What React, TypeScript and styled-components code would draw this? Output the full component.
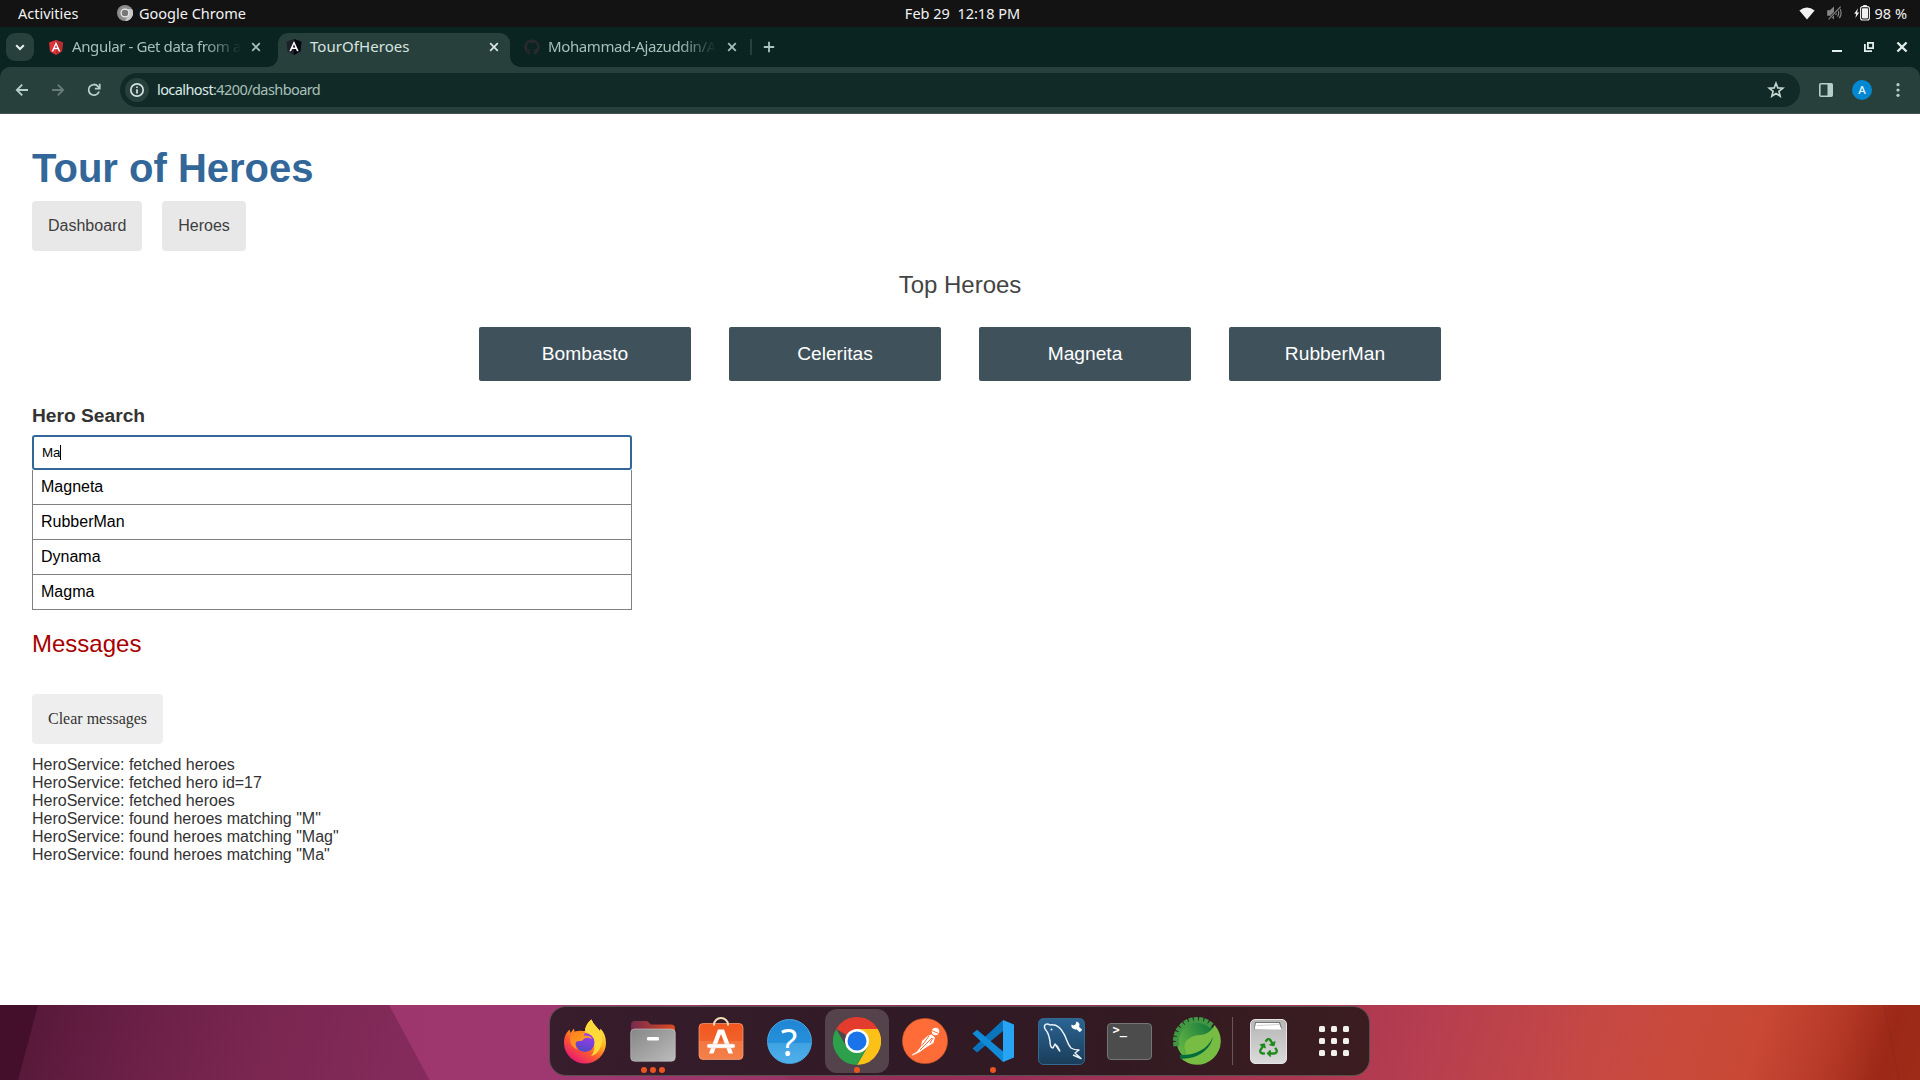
import React from "react";
import styled, { createGlobalStyle } from "styled-components";
import { FaGithub, FaRecycle } from "react-icons/fa";

const UI = `"Noto Sans", "Open Sans", sans-serif`;
const SANS = `"Liberation Sans", Arial, sans-serif`;

const Global = createGlobalStyle`
  *, *::before, *::after { box-sizing: border-box; }
  html, body { margin: 0; padding: 0; }
  body { width: 1920px; height: 1080px; overflow: hidden; background: #fff; }
  svg { display: block; flex: none; }
`;

const Desktop = styled.div`
  display: flex;
  flex-direction: column;
  width: 1920px;
  height: 1080px;
  overflow: hidden;
`;

/* ---------- GNOME top bar ---------- */
const TopBar = styled.header`
  display: grid;
  grid-template-columns: 1fr auto 1fr;
  align-items: center;
  height: 27px;
  flex: none;
  padding: 0 13px 1px 18px;
  background: #131313;
  color: #f2f2f2;
  font: 400 14.5px/26px ${UI};
`;

const BarGroup = styled.div<{ $end?: boolean; $gap?: number }>`
  display: flex;
  align-items: center;
  justify-content: ${(p) => (p.$end ? "flex-end" : "flex-start")};
  gap: ${(p) => p.$gap ?? 0}px;
`;

const Label = styled.span<{ $w?: number; $ls?: number; $ml?: number }>`
  white-space: pre;
  width: ${(p) => (p.$w ? p.$w + "px" : "auto")};
  margin-left: ${(p) => p.$ml ?? 0}px;
  letter-spacing: ${(p) => p.$ls ?? 0}px;
`;

/* ---------- Browser chrome ---------- */
const TabStrip = styled.div`
  display: flex;
  align-items: stretch;
  height: 40px;
  flex: none;
  padding: 6px 12px 0 6px;
  background: #0a2421;
`;

const TabMenu = styled.button`
  display: grid;
  place-items: center;
  width: 28px;
  height: 28px;
  padding: 0;
  border: 0;
  border-radius: 9px;
  background: #28403b;
  color: #e4f1ed;
`;

const Tab = styled.div<{ $active?: boolean; $w: number; $pad: number; $end: number }>`
  position: relative;
  display: flex;
  align-items: center;
  width: ${(p) => p.$w}px;
  height: 34px;
  padding: 0 ${(p) => p.$end}px 6px ${(p) => p.$pad}px;
  border-radius: 10px 10px 0 0;
  background: ${(p) => (p.$active ? "#28403b" : "transparent")};
  color: ${(p) => (p.$active ? "#d6e5e1" : "#a5c0b9")};
  font: 400 15px/26px ${UI};

  &::before,
  &::after {
    content: "";
    display: ${(p) => (p.$active ? "block" : "none")};
    position: absolute;
    bottom: 0;
    width: 10px;
    height: 10px;
  }
  &::before {
    left: -10px;
    background: radial-gradient(circle at 0 0, transparent 9.5px, #28403b 10px);
  }
  &::after {
    right: -10px;
    background: radial-gradient(circle at 100% 0, transparent 9.5px, #28403b 10px);
  }
`;

const TabTitle = styled.span<{ $fade?: boolean; $ls: number; $w: number; $ml?: number }>`
  width: ${(p) => p.$w}px;
  margin-left: ${(p) => p.$ml ?? 8}px;
  padding-bottom: 2px;
  white-space: nowrap;
  letter-spacing: ${(p) => p.$ls}px;
  mask-image: ${(p) =>
    p.$fade ? "linear-gradient(90deg, #000 calc(100% - 36px), transparent)" : "none"};
`;

const Push = styled.span`
  margin-left: auto;
  display: flex;
  align-items: center;
`;

const Divider = styled.i`
  width: 2px;
  height: 16px;
  margin: 6px 11px 0 4px;
  background: #28403b;
`;

const StripIcon = styled.span<{ $c?: string }>`
  display: flex;
  align-items: center;
  height: 28px;
  color: ${(p) => p.$c ?? "#a9c7bf"};
`;

const Windows = styled.div`
  display: flex;
  align-items: center;
  height: 28px;
  margin-left: auto;
  gap: 22px;
`;

const ToolbarWrap = styled.div`
  flex: none;
  height: 47px;
  background: #0a2421;
`;

const Toolbar = styled.div`
  display: flex;
  align-items: center;
  height: 47px;
  padding: 0 20px 1px 15px;
  border-bottom: 1px solid #3f534f;
  border-radius: 10px 10px 0 0;
  background: #28403b;
`;

const NavButtons = styled.div`
  display: flex;
  gap: 22px;
  width: 105px;
`;

const Omnibox = styled.div`
  display: flex;
  align-items: center;
  width: 1680px;
  height: 34px;
  padding: 0 15px 0 5px;
  border-radius: 17px;
  background: #122a27;
  color: #a9c0ba;
  font: 400 14.5px/32px ${UI};

  b {
    font-weight: 400;
    color: #dcebe7;
  }
`;

const Url = styled(Label)`
  padding-bottom: 2px;
`;

const InfoBadge = styled.span`
  display: grid;
  place-items: center;
  width: 24px;
  height: 24px;
  margin-right: 8px;
  border-radius: 50%;
  background: #28403b;
`;

const Avatar = styled.span`
  width: 20px;
  height: 20px;
  border-radius: 50%;
  background: #0288d1;
  color: #e6f3fa;
  text-align: center;
  font: 500 11.5px/20px ${UI};
`;

const ToolbarEnd = styled.div`
  display: flex;
  align-items: center;
  margin-left: 19px;
  gap: 19px;
`;

/* ---------- Web page ---------- */
const Page = styled.main`
  height: 891px;
  flex: none;
  padding: 31px 32px 32px;
  background: #fff;
  color: #333;
  font: 400 16px/18px ${SANS};
`;

const Title = styled.h1`
  margin: 0 0 10px;
  color: #336699;
  font: 700 40px/46px ${SANS};
`;

const Nav = styled.nav`
  display: flex;
  gap: 20px;
`;

const NavLink = styled.a`
  height: 50px;
  padding: 16px;
  border-radius: 4px;
  background: #e8e8e8;
  color: #3d3d3d;
`;

const Heading = styled.h2<{ $center?: boolean; $color: string; $bottom: number }>`
  margin: 20px 0 ${(p) => p.$bottom}px;
  text-align: ${(p) => (p.$center ? "center" : "left")};
  color: ${(p) => p.$color};
  font: 400 24px/28px ${SANS};
`;

const HeroMenu = styled.div`
  display: flex;
  justify-content: center;
  gap: 38px;
`;

const HeroCard = styled.a`
  width: 212px;
  height: 54px;
  padding: 16px 0;
  border-radius: 2px;
  background: #3f525c;
  color: #fff;
  text-align: center;
  font: 400 19.2px/22px ${SANS};
`;

const SearchLabel = styled.label`
  display: block;
  margin: 24px 0 8px;
  font: 700 19.2px/22px ${SANS};
`;

const SearchBox = styled.div`
  display: flex;
  align-items: center;
  width: 600px;
  height: 35px;
  padding: 0 8px 1px;
  border: 2px solid #336699;
  border-radius: 3px;
  color: #000;
  font: 400 13.333px/15px ${SANS};
`;

const Caret = styled.i`
  width: 1px;
  height: 15px;
  margin-left: -1px;
  background: #000;
`;

const Results = styled.ul`
  width: 600px;
  margin: 0;
  padding: 0;
  list-style: none;
`;

const Result = styled.li`
  height: 35px;
  padding: 8px;
  border: 1px solid #808080;
  border-top: 0;
  color: #000;
`;

const ClearButton = styled.button`
  display: block;
  height: 50px;
  margin: 0 0 12px;
  padding: 0 16px;
  border: 0;
  border-radius: 4px;
  background: #eee;
  color: #333;
  font: 400 16px/18px "Liberation Serif", "Times New Roman", serif;
`;

/* ---------- Dock ---------- */
const Wallpaper = styled.footer`
  position: relative;
  display: flex;
  justify-content: center;
  height: 75px;
  flex: none;
  padding: 1px 1px 0 0;
  background: linear-gradient(
    107deg,
    #541838 1%,
    #6a1f46 7%,
    #78264f 13%,
    #842b5b 22%,
    #95305c 38%,
    #972e58 52%,
    #ab3650 68%,
    #b33c51 72.5%,
    #c54845 82%,
    #c94a3b 87%,
    #c84835 91%,
    #b63927 95%,
    #9c2817 97.8%,
    #9e2a18 100%
  );
`;

const Facets = styled.svg`
  position: absolute;
  inset: 0;
`;

const Dock = styled.div`
  position: relative;
  display: flex;
  align-items: flex-start;
  width: 821px;
  height: 70px;
  padding: 2px 0 0 3px;
  border: 1px solid #56504f;
  border-radius: 17px;
  background: linear-gradient(100deg, #381d2c 0%, #301a25 45%, #331a22 70%, #3b1d20 100%);
`;

const Slot = styled.div<{ $active?: boolean; $w?: number }>`
  position: relative;
  display: grid;
  place-items: center;
  flex: none;
  width: ${(p) => p.$w ?? 64}px;
  height: 64px;
  margin-right: 4px;
  border-radius: 12px;
  background: ${(p) => (p.$active ? "#55434c" : "transparent")};
`;

const Dots = styled.span`
  position: absolute;
  bottom: 0;
  left: 0;
  right: 0;
  display: flex;
  justify-content: center;
  gap: 3px;

  i {
    width: 6px;
    height: 6px;
    border-radius: 50%;
    background: #e95420;
  }
`;

const DockRule = styled.i`
  flex: none;
  width: 1px;
  height: 48px;
  margin: 8px 3px 0 -1px;
  background: #6a5558;
`;

/* ---------- Small icons ---------- */
const Cross = ({ s = 8, w = 1.8 }: { s?: number; w?: number }) => (
  <svg width={s + 2} height={s + 2} viewBox="0 0 10 10" stroke="currentColor" strokeWidth={w}>
    <path d="M1.2 1.2 8.8 8.8M8.8 1.2 1.2 8.8" />
  </svg>
);

const AngularMark = ({ dark }: { dark?: boolean }) => (
  <svg width={dark ? 16 : 14} height={dark ? 16 : 15} viewBox="0 0 16 17">
    <path d="M8 0 16 2.8 14.8 13.2 8 17 1.2 13.2 0 2.8Z" fill={dark ? "#1d1f2b" : "#e23237"} />
    <path d="M8 0 16 2.8 14.8 13.2 8 17Z" fill={dark ? "#050712" : "#b52e31"} />
    <path
      fillRule="evenodd"
      d="M8 2 13 13H11.1L10.1 10.5H5.9L4.9 13H3ZM8 5.5 6.6 8.9H9.4Z"
      fill="#fff"
    />
  </svg>
);

const Back = ({ flip }: { flip?: boolean }) => (
  <svg
    width="14"
    height="14"
    viewBox="0 0 14 14"
    fill="none"
    stroke={flip ? "#667d77" : "#b4d0c9"}
    strokeWidth="1.8"
    transform={flip ? "scale(-1 1)" : undefined}
  >
    <path d="M13 7H2M7.2 1.6 1.8 7 7.2 12.4" />
  </svg>
);

const Reload = () => (
  <svg width="14" height="14" viewBox="0 0 14 14" fill="none" stroke="#b4d0c9" strokeWidth="1.8">
    <path d="M12 8.4A5.3 5.3 0 1 1 10.9 3.3L12.6 5" />
    <path d="M12.7.8V5.6H7.9" />
  </svg>
);

const Info = () => (
  <svg width="16" height="16" viewBox="0 0 16 16" fill="none" stroke="#d3e2de" strokeWidth="1.7">
    <circle cx="8" cy="8" r="6.2" />
    <path d="M8 7.2V11.4M8 4.4V6.1" />
  </svg>
);

const Star = () => (
  <svg width="18" height="18" viewBox="0 0 18 18" fill="none" stroke="#c6d6d2" strokeWidth="1.6">
    <path d="M9 2.2 10.8 6.9 15.8 7.2 11.9 10.3 13.2 15.2 9 12.5 4.8 15.2 6.1 10.3 2.2 7.2 7.2 6.9Z" />
  </svg>
);

const ChromeGrey = () => (
  <svg width="16" height="16" viewBox="0 0 16 16">
    <circle cx="8" cy="8" r="8" fill="#8e8e8e" />
    <path d="M8 4H15A8 8 0 0 1 8 16L11.5 10Z" fill="#c9c9c9" />
    <circle cx="8" cy="8" r="3.9" fill="#777" stroke="#eee" strokeWidth="1.2" />
  </svg>
);

const Wifi = () => (
  <svg width="16" height="13" viewBox="0 0 16 13">
    <path d="M.4 3.4Q8-2.6 15.6 3.4L8 12.6Z" fill="#f2f2f2" />
  </svg>
);

const Muted = () => (
  <svg width="15" height="14" viewBox="0 0 15 14" fill="none" stroke="#858585" strokeWidth="1.2">
    <path d="M.8 4.8H3.2L6.4 1.8V12.2L3.2 9.2H.8Z" fill="#858585" />
    <path d="M8.6 5Q9.8 7 8.6 9M10.6 3.4Q12.8 7 10.6 10.6M12.4 1.8Q15.8 7 12.4 12.2" />
    <path d="M1.6 13.4 13.6.6" stroke="#131313" strokeWidth="2.4" />
    <path d="M1.6 13.4 13.6.6" />
  </svg>
);

const Battery = () => (
  <svg width="16" height="16" viewBox="0 0 16 16">
    <path d="M4 3.2.2 8.8H2.2L1.4 13 5.2 7.4H3.1Z" fill="#f2f2f2" />
    <path d="M9.2 0H12.8V2H9.2Z" fill="#f2f2f2" />
    <rect x="6.6" y="1.6" width="8.8" height="13.4" rx="2" fill="none" stroke="#f2f2f2" strokeWidth="1.1" />
    <rect x="8" y="3.2" width="6" height="10.2" rx=".8" fill="#f2f2f2" />
  </svg>
);

/* ---------- Dock icons ---------- */
const Firefox = () => (
  <svg width="44" height="46" viewBox="0 0 44 46">
    <defs>
      <linearGradient id="ffBody" x1=".85" y1=".1" x2=".25" y2="1">
        <stop offset="0" stopColor="#fff04a" />
        <stop offset=".35" stopColor="#ffb01f" />
        <stop offset=".62" stopColor="#ff5b2e" />
        <stop offset="1" stopColor="#e5157a" />
      </linearGradient>
      <linearGradient id="ffGlobe" x1=".6" y1="0" x2=".4" y2="1">
        <stop offset="0" stopColor="#a13af0" />
        <stop offset="1" stopColor="#5249c4" />
      </linearGradient>
      <linearGradient id="ffHead" x1="0" y1="0" x2="1" y2="1">
        <stop offset="0" stopColor="#ff7a1c" />
        <stop offset="1" stopColor="#ffb52a" />
      </linearGradient>
    </defs>
    <path
      d="M28.5 1.5C30 6 34 9 37 13L37.5 10.5C41 14 43 19 43 25A21 20.5 0 0 1 1 25C1 18 3.5 14.5 6.5 11.5L7.5 15 11 10.5 11.5 14 22 13C22 9 25 4 28.5 1.5Z"
      fill="url(#ffBody)"
    />
    <path d="M28.5 1.5C30 6 34 9 37 13 42 21 38 36 28 38 34 32 32 20 22.5 14 21.5 9 25 4 28.5 1.5Z" fill="#ffd83a" />
    <circle cx="22" cy="24.5" r="9.5" fill="url(#ffGlobe)" />
    <path d="M12 13.5C17 12 20 13 22 14L21 17.5C25 17.5 28.5 18.5 29 21 24 18.5 21 20 19.5 22.5 16 23.5 13.5 22.5 12.5 25 12 27 13 30 15 31.5 9 30 6 24 7 18Z" fill="url(#ffHead)" />
  </svg>
);

const Files = () => (
  <svg width="46" height="42" viewBox="0 0 46 42">
    <defs>
      <linearGradient id="flTop">
        <stop offset="0" stopColor="#762a50" />
        <stop offset="1" stopColor="#dd4b1d" />
      </linearGradient>
      <linearGradient id="flBody" x1="0" y1="0" x2="1" y2="1">
        <stop offset="0" stopColor="#868686" />
        <stop offset="1" stopColor="#bcbcbc" />
      </linearGradient>
    </defs>
    <path d="M1 20V5Q1 1 5 1H17L21 4.5H41Q45 4.5 45 8V20Z" fill="url(#flTop)" />
    <rect x=".7" y="9" width="44.6" height="32.3" rx="4" fill="url(#flBody)" stroke="#cfcfcf" strokeOpacity=".55" />
    <rect x="17" y="17" width="12" height="3.6" rx="1.4" fill="#fff" />
  </svg>
);

const Software = () => (
  <svg width="46" height="48" viewBox="0 0 46 48">
    <defs>
      <linearGradient id="swBag" x1="0" y1="0" x2="0" y2="1">
        <stop offset="0" stopColor="#f2571f" />
        <stop offset=".5" stopColor="#f0632b" />
        <stop offset=".5" stopColor="#f3763f" />
        <stop offset="1" stopColor="#f4804a" />
      </linearGradient>
    </defs>
    <rect x="1" y="6.500" width="44" height="36" rx="4" fill="url(#swBag)" stroke="#f9a37d" strokeOpacity=".7" />
    <path d="M16 8.500V7.500A7 6.500 0 0 1 30 7.500V8.500" fill="none" stroke="#f6dfb8" strokeWidth="2" />
    <path d="M20 12.500H26L35 36.500H30.500L23 17 15.500 36.500H11Z" fill="#fff" />
    <rect x="9" y="27" width="28" height="4" rx="2" fill="#fff" stroke="#f2b49a" strokeWidth=".5" />
  </svg>
);

const QuestionRound = styled.span`
  width: 45px;
  height: 45px;
  border-radius: 50%;
  border: 1px solid #4aa8e2;
  background: linear-gradient(#1f86d6 0%, #2590db 54%, #3fa2e2 54%, #4fb0ea 100%);
  color: #fff;
  text-align: center;
  font: 400 38px/43px ${UI};
`;

const ChromeIcon = () => (
  <svg width="48" height="48" viewBox="0 0 48 48">
    <path d="M24 24 3.2 12A24 24 0 0 1 44.8 12Z" fill="#e33b2e" />
    <path d="M24 12H44.8A24 24 0 0 1 24 48L34.4 30Z" fill="#fbc116" />
    <path d="M13.6 30 3.2 12A24 24 0 0 0 24 48L34.4 30Z" fill="#2da04c" />
    <circle cx="24" cy="24" r="12" fill="#fff" />
    <circle cx="24" cy="24" r="9.5" fill="#1a73e8" />
  </svg>
);

const Postman = () => (
  <svg width="46" height="46" viewBox="0 0 46 46">
    <circle cx="23" cy="23" r="22.6" fill="#ff6c37" stroke="#c9542c" strokeWidth=".6" />
    <circle cx="33.5" cy="13.5" r="3.7" fill="#fff" />
    <path d="M30 12.5 36.5 15.5" stroke="#ff6c37" strokeWidth="1" />
    <path d="M29.5 16.5 33 19.5 31.5 25 24 29.5 17 34.5 10.5 37.5 10 36.5 14.5 34 19 28.5 20 23 25.5 18Z" fill="#fff" />
    <path d="M30 20 18 32M27 18 20 27.5M28 25 31 20" stroke="#ff6c37" strokeWidth="1" />
  </svg>
);

const VsCode = () => (
  <svg width="42" height="42" viewBox="0 0 42 42">
    <path d="M.5 28.5 5 32.500 31 11V0Z" fill="#0a74bd" />
    <path d="M.5 13.5 5 9.700 31 31.500V42Z" fill="#118ad8" />
    <path d="M31 0 42 4.500V37.500L31 42Z" fill="#27a5f4" />
  </svg>
);

const Workbench = () => (
  <svg width="47" height="47" viewBox="0 0 47 47" fill="none">
    <defs>
      <linearGradient id="wbBg" x1="0" y1="0" x2="0" y2="1">
        <stop offset="0" stopColor="#2b6494" />
        <stop offset="1" stopColor="#1a3d59" />
      </linearGradient>
    </defs>
    <rect x=".5" y=".5" width="46" height="46" rx="5" fill="url(#wbBg)" stroke="#356a90" />
    <path
      d="M7 11C5 6 9 5 12 7 18 6 23 10 26 16 29 21 29 26 33 30 36 32 39 32 41 32L37 35 43 40.5 35 37M7 11C11 15 11 19 12 23 12 27 13 30 15 30L17 26 22 33.5M17 26C20 28 20 30 22 33.5"
      stroke="#e9f1f6"
      strokeWidth="1.5"
      strokeLinejoin="round"
    />
    <circle cx="13.5" cy="11.5" r=".9" fill="#fff" />
    <path d="M37 7.5 43 13" stroke="#fff" strokeWidth="3.6" />
    <path d="M33.5 6.5A4 4 0 1 0 38.5 3.5L37.5 6.5 35.5 7.5Z" fill="#fff" />
  </svg>
);

const TerminalBox = styled.span`
  width: 45px;
  height: 37px;
  padding: 0 0 0 5px;
  border: 1px solid #757575;
  border-radius: 4px;
  background: #4c4c4c;
  color: #fff;
  font: 700 12px/13px "DejaVu Sans Mono", monospace;
`;

const Spring = () => {
  const teeth = Array.from({ length: 11 }, (_, i) => 172 + i * 13.6);
  return (
    <svg width="48" height="48" viewBox="0 0 48 48">
      <defs>
        <linearGradient id="spGear" x1="0" y1=".5" x2="1" y2="0">
          <stop offset="0" stopColor="#5fb344" />
          <stop offset="1" stopColor="#046b3a" />
        </linearGradient>
      </defs>
      <circle cx="24" cy="24" r="20.5" fill="url(#spGear)" />
      {teeth.map((a) => (
        <rect key={a} x="42" y="21.8" width="6" height="4.4" fill="#409845" transform={`rotate(${a} 24 24)`} />
      ))}
      <path d="M41.5 8A23.700 23.700 0 0 1 7 40.500C12 40 14 38.500 12.500 34 8 23 19 18.500 27 18 34 17.500 38.500 14 41.500 8Z" fill="#77bc43" />
      <path d="M6.5 38C20 39 35 33 40 19.500 37.500 35 20 43 7.500 41.500Z" fill="#046b3a" />
    </svg>
  );
};

const TrashCan = styled.span`
  display: flex;
  flex-direction: column;
  align-items: center;
  width: 37px;
  height: 45px;
  padding-top: 2px;
  border: 1px solid #e4e4e4;
  border-radius: 5px;
  background: linear-gradient(#b5b5b5, #dadada);
  color: #1f8a1c;

  svg + svg {
    margin-top: 8px;
  }
`;

const AppGrid = styled.span`
  display: grid;
  grid-template-columns: repeat(3, 6px);
  gap: 6px;

  i {
    width: 6px;
    height: 6px;
    border-radius: 1.5px;
    background: #f2f0ee;
  }
`;

const heroes = ["Bombasto", "Celeritas", "Magneta", "RubberMan"];
const results = ["Magneta", "RubberMan", "Dynama", "Magma"];
const messages = [
  "HeroService: fetched heroes",
  "HeroService: fetched hero id=17",
  "HeroService: fetched heroes",
  'HeroService: found heroes matching "M"',
  'HeroService: found heroes matching "Mag"',
  'HeroService: found heroes matching "Ma"',
];

export default function App() {
  return (
    <Desktop>
      <Global />
      <TopBar>
        <BarGroup>
          <Label $w={99}>Activities</Label>
          <ChromeGrey />
          <Label $ml={6}>Google Chrome</Label>
        </BarGroup>
        <Label>Feb 29  12:18 PM</Label>
        <BarGroup $end>
          <BarGroup $gap={12}>
            <Wifi />
            <Muted />
            <BarGroup $gap={5}>
              <Battery />
              <Label>98 %</Label>
            </BarGroup>
          </BarGroup>
        </BarGroup>
      </TopBar>

      <TabStrip>
        <TabMenu>
          <svg width="10" height="7" viewBox="0 0 10 7" fill="none" stroke="currentColor" strokeWidth="2">
            <path d="M1.2 1.2 5 5 8.8 1.2" />
          </svg>
        </TabMenu>
        <Tab $w={244} $pad={15} $end={17}>
          <AngularMark />
          <TabTitle $fade $ls={-0.4} $w={169} $ml={9}>Angular - Get data from a</TabTitle>
          <Push><Cross /></Push>
        </Tab>
        <Tab $active $w={232} $pad={8} $end={11}>
          <AngularMark dark />
          <TabTitle $ls={0.05} $w={150}>TourOfHeroes</TabTitle>
          <Push><Cross /></Push>
        </Tab>
        <Tab $w={236} $pad={14} $end={9}>
          <FaGithub size={16} color="#28282e" />
          <TabTitle $fade $ls={-0.4} $w={168}>Mohammad-Ajazuddin/A</TabTitle>
          <Push><Cross /></Push>
        </Tab>
        <Divider />
        <StripIcon>
          <svg width="12" height="12" viewBox="0 0 12 12" stroke="currentColor" strokeWidth="1.8">
            <path d="M6 .8V11.2M.8 6H11.2" />
          </svg>
        </StripIcon>
        <Windows>
          <svg width="10" height="10" viewBox="0 0 10 10"><path d="M0 8H10V10H0Z" fill="#e4efec" /></svg>
          <svg width="10" height="10" viewBox="0 0 10 10" fill="none" stroke="#e4efec" strokeWidth="1.8">
            <path d="M3.9.9H9.1V6.1H3.9ZM.9 2V9.1H8" />
          </svg>
          <StripIcon $c="#e4efec"><Cross s={10} w={1.9} /></StripIcon>
        </Windows>
      </TabStrip>

      <ToolbarWrap>
        <Toolbar>
          <NavButtons>
            <Back />
            <Back flip />
            <Reload />
          </NavButtons>
          <Omnibox>
            <InfoBadge><Info /></InfoBadge>
            <Url $ls={-0.58}><b>localhost</b>:4200/dashboard</Url>
            <Push><Star /></Push>
          </Omnibox>
          <ToolbarEnd>
            <svg width="14" height="14" viewBox="0 0 14 14">
              <rect x=".8" y=".8" width="12.4" height="12.4" rx="1" fill="none" stroke="#b4d0c9" strokeWidth="1.6" />
              <path d="M8.5 1H13V13H8.5Z" fill="#b4d0c9" />
            </svg>
            <Avatar>A</Avatar>
          </ToolbarEnd>
          <Push>
            <svg width="4" height="14" viewBox="0 0 4 14" fill="#b4d0c9">
              <circle cx="2" cy="1.7" r="1.6" />
              <circle cx="2" cy="7" r="1.6" />
              <circle cx="2" cy="12.3" r="1.6" />
            </svg>
          </Push>
        </Toolbar>
      </ToolbarWrap>

      <Page>
        <Title>Tour of Heroes</Title>
        <Nav>
          <NavLink>Dashboard</NavLink>
          <NavLink>Heroes</NavLink>
        </Nav>
        <Heading $center $color="#444" $bottom={28}>Top Heroes</Heading>
        <HeroMenu>
          {heroes.map((h) => <HeroCard key={h}>{h}</HeroCard>)}
        </HeroMenu>
        <SearchLabel>Hero Search</SearchLabel>
        <SearchBox>Ma<Caret /></SearchBox>
        <Results>
          {results.map((r) => <Result key={r}>{r}</Result>)}
        </Results>
        <Heading $color="#a80000" $bottom={36}>Messages</Heading>
        <ClearButton>Clear messages</ClearButton>
        {messages.map((m, i) => <div key={i}>{m}</div>)}
      </Page>

      <Wallpaper>
        <Facets width="1920" height="75" viewBox="0 0 1920 75">
          <defs>
            <linearGradient id="pink" gradientUnits="userSpaceOnUse" x1="390" y1="0" x2="1369" y2="0">
              <stop offset="0" stopColor="#9c366c" />
              <stop offset=".2" stopColor="#a03871" />
              <stop offset=".35" stopColor="#a03871" stopOpacity=".6" />
              <stop offset=".6" stopColor="#a03871" stopOpacity="0" />
            </linearGradient>
          </defs>
          <path d="M0 0H38L18 75H0Z" fill="#430f2b" />
          <path d="M389 0H700L790 75H429.5Z" fill="url(#pink)" />
          <path d="M1884 0 1899 75" stroke="#8c2a1e" strokeWidth="1.5" strokeOpacity=".5" />
        </Facets>
        <Dock>
          <Slot><Firefox /></Slot>
          <Slot><Files /><Dots><i /><i /><i /></Dots></Slot>
          <Slot><Software /></Slot>
          <Slot><QuestionRound>?</QuestionRound></Slot>
          <Slot $active><ChromeIcon /><Dots><i /></Dots></Slot>
          <Slot><Postman /></Slot>
          <Slot><VsCode /><Dots><i /></Dots></Slot>
          <Slot><Workbench /></Slot>
          <Slot><TerminalBox>&gt;_</TerminalBox></Slot>
          <Slot><Spring /></Slot>
          <DockRule />
          <Slot>
            <TrashCan>
              <svg width="30" height="8" viewBox="0 0 30 8">
                <path d="M2 0H27L29 6.5 1 8Z" fill="#777" />
                <path d="M3 1H26L28.5 7.5H1.5Z" fill="#fff" />
                <path d="M4 3.5 26 2.5" stroke="#bbb" strokeWidth=".7" />
              </svg>
              <FaRecycle size={19} />
            </TrashCan>
          </Slot>
          <Slot $w={60}><AppGrid>{Array.from({ length: 9 }, (_, i) => <i key={i} />)}</AppGrid></Slot>
        </Dock>
      </Wallpaper>
    </Desktop>
  );
}
